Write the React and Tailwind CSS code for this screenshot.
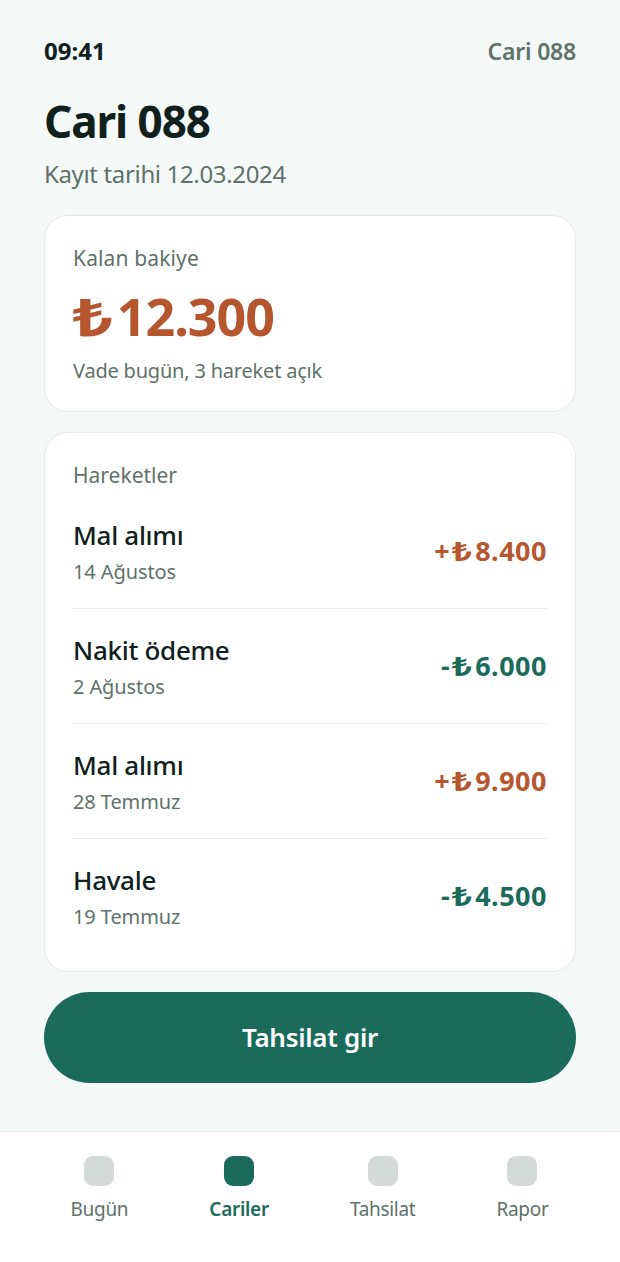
const font = { fontFamily: '"Noto Sans", sans-serif' };

const rows = [
  { title: 'Mal alımı', date: '14 Ağustos', sign: '+', value: '8.400', color: 'text-[#b5562f]' },
  { title: 'Nakit ödeme', date: '2 Ağustos', sign: '-', value: '6.000', color: 'text-[#1b6b5a]' },
  { title: 'Mal alımı', date: '28 Temmuz', sign: '+', value: '9.900', color: 'text-[#b5562f]' },
  { title: 'Havale', date: '19 Temmuz', sign: '-', value: '4.500', color: 'text-[#1b6b5a]' },
];

const tabs = [
  { label: 'Bugün' },
  { label: 'Cariler', active: true },
  { label: 'Tahsilat' },
  { label: 'Rapor' },
];

const App = () => {
  return (
    <div style={font} className="w-[620px] h-[1262px] bg-[#f4f8f7] flex flex-col overflow-hidden">
      <div className="flex-1 px-[44px]">
        <div className="flex justify-between items-center pt-[34px] h-[68px]">
          <span className="text-[24px] leading-[32px] font-bold text-[#10201c]">09:41</span>
          <span className="text-[23px] leading-[32px] font-semibold text-[#5f7169] tracking-[-0.2px]">Cari 088</span>
        </div>

        <h1 className="mt-[27px] text-[44px] leading-[52px] font-bold text-[#10201c] tracking-[-1.05px]">Cari 088</h1>
        <p className="mt-[10px] text-[24px] leading-[34px] text-[#5f7169] tracking-[-0.35px]">Kayıt tarihi 12.03.2024</p>

        <section className="mt-[24px] h-[197px] bg-white border border-[#e4eae8] rounded-[24px] pt-[27px] px-[28px]">
          <p className="text-[21px] leading-[30px] text-[#5f7169] tracking-[0.13px]">Kalan bakiye</p>
          <p className="mt-[11px] text-[52px] leading-[64px] font-bold text-[#b5562f] tracking-[-1px] whitespace-nowrap">
            <span className="inline-block origin-left scale-x-[1.35] mr-[15px]">₺</span>12.300
          </p>
          <p className="mt-[8px] text-[20px] leading-[30px] text-[#5f7169] tracking-[-0.2px]">Vade bugün, 3 hareket açık</p>
        </section>

        <section className="mt-[20px] h-[540px] bg-white border border-[#e4eae8] rounded-[24px] pt-[27px] px-[28px]">
          <p className="text-[21px] leading-[30px] text-[#5f7169]">Hareketler</p>
          <div className="mt-[4px]">
            {rows.map((row, i) => (
              <div
                key={i}
                className={`flex justify-between items-center h-[115px] pt-[3px] border-b ${i < rows.length - 1 ? 'border-[#e4eae8]' : 'border-transparent'}`}
              >
                <div>
                  <p className="text-[26px] leading-[34px] font-medium text-[#10201c] tracking-[-0.3px]">{row.title}</p>
                  <p className="mt-[5px] text-[20px] leading-[30px] text-[#5f7169] tracking-[-0.1px]">{row.date}</p>
                </div>
                <span className={`mb-[3px] text-[27px] leading-[36px] font-bold ${row.color} tracking-[0.5px] whitespace-nowrap`}>
                  {row.sign}
                  <span className="inline-block origin-left scale-x-[1.3] ml-[2px] mr-[7px]">₺</span>
                  {row.value}
                </span>
              </div>
            ))}
          </div>
        </section>

        <button className="mt-[20px] w-full h-[91px] rounded-full bg-[#1b6b5a] text-white text-[26px] font-semibold tracking-[-0.3px]">
          Tahsilat gir
        </button>
      </div>

      <nav className="h-[131px] bg-white border-t border-[#e4eae8] flex justify-around pl-[30px] pr-[31px] pt-[24px]">
        {tabs.map((tab) => (
          <div key={tab.label} className="flex flex-col items-center">
            <div className={`w-[30px] h-[30px] rounded-[9px] ${tab.active ? 'bg-[#1b6b5a]' : 'bg-[#d3dad8]'}`} />
            <span className={`mt-[9px] text-[19px] leading-[28px] tracking-[-0.3px] ${tab.active ? 'font-semibold text-[#1b6b5a]' : 'text-[#5f7169]'}`}>
              {tab.label}
            </span>
          </div>
        ))}
      </nav>
    </div>
  );
};

export default App;
